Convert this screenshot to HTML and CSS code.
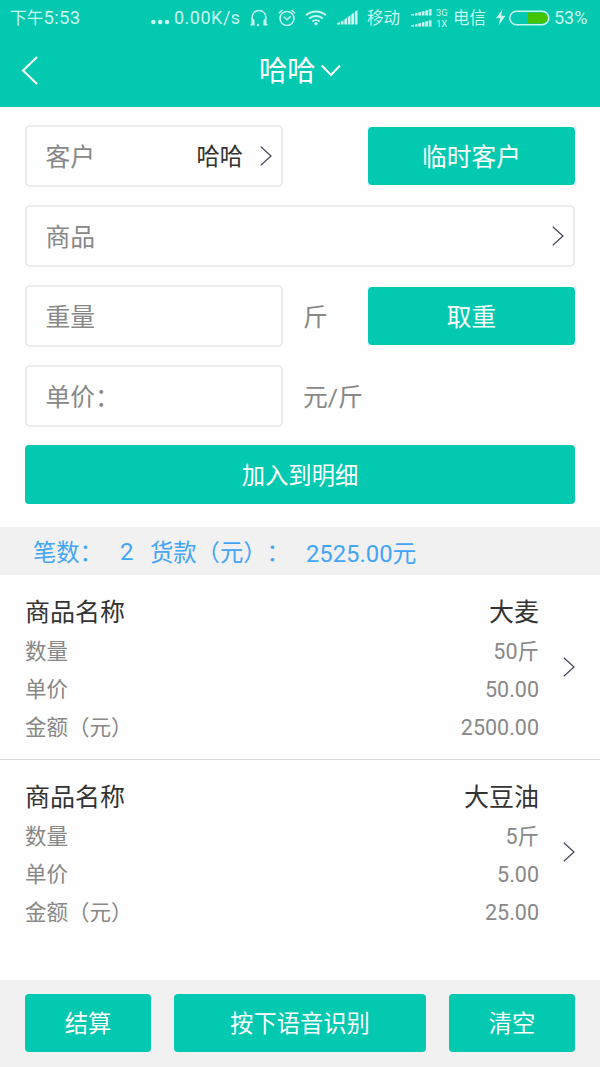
FILE: index.html
```html
<!DOCTYPE html>
<html lang="zh-CN">
<head>
<meta charset="utf-8">
<title>哈哈</title>
<link rel="stylesheet" href="styles.css">
</head>
<body>
<div class="app">
  <header class="header">
    <div class="status">
      <span class="clock">下午<span class="digits">5:53</span></span>
      <svg class="dots" width="19" height="6" viewBox="0 0 19 6"><circle cx="2.400" cy="3" r="2.300"/><circle cx="9.200" cy="3" r="2.300"/><circle cx="16" cy="3" r="2.300"/></svg>
      <span class="speed">0.00K/s</span>
      <svg class="headset" width="18" height="18" viewBox="0 0 18 18"><path class="line" d="M.5 15.800h3.300v-4.300L2.200 9.800C1.700 5 4.500 1.500 9 1.500s7.300 3.500 6.800 8.300l-1.600 1.700v4.300h3.300M2.200 9.800v6M15.800 9.800v6"/><circle cx="8" cy="16" r="1.200"/></svg>
      <svg class="alarm" width="18" height="18" viewBox="0 0 18 18"><circle class="line" cx="9" cy="9.500" r="7"/><path class="line" d="M5.800 7.800 9 10.800l3.800-3.500M.8 4.300 4.500 1M17.200 4.300 13.500 1"/></svg>
      <svg class="wifi" width="22" height="16" viewBox="0 0 22 16"><path class="arc" d="M1 5.200a15 15 0 0 1 20 0M4.200 8.600a10.200 10.200 0 0 1 13.600 0M7.400 11.600a5.500 5.500 0 0 1 7.200 0"/><circle cx="11" cy="13.800" r="1.700"/></svg>
      <svg class="signal" width="21" height="15" viewBox="0 0 21 15"><path d="M0 13.200 3 12v2.500H0zM3.800 11.600l2.700-1.200v4.100H3.800zM7.300 9.500 10 8v6.500H7.300zM10.800 7l2.700-1.700v9.200h-2.700zM14.300 4.500 17 2.600v11.900h-2.700zM17.800 1.800 20.500 0v14.500h-2.700z"/></svg>
      <span class="carrier">移动</span>
      <svg class="dual" width="21" height="18" viewBox="0 0 21 18"><g id="bars"><path d="M0 5.300 3 4.700v1.800H0zM3.800 4.500l2.700-.6v2.600H3.800zM7.300 3.600 10 3v3.500H7.300zM10.800 2.600l2.700-.7v4.600h-2.700zM14.300 1.600 17 .9v5.600h-2.700zM17.800.6l2.700-.6v6.500h-2.700z"/></g><use href="#bars" y="11"/></svg>
      <span class="nets"><span>3G</span><span>1X</span></span>
      <span class="carrier two">电信</span>
      <svg class="bolt" width="10" height="17" viewBox="0 0 10 17"><path d="M6.500 0 0 9.200h4.300L2.700 16.500 9.500 6.800H5.200z"/></svg>
      <svg class="battery" width="41" height="16" viewBox="0 0 41 16"><path fill="#44c400" d="M19 2.500H33a5.500 5.500 0 0 1 0 11H19z"/><rect class="line" x=".8" y="1.300" width="39" height="13.400" rx="6.700"/></svg>
      <span class="percent">53%</span>
    </div>
    <div class="titlebar">
      <svg class="back" width="17" height="29" viewBox="0 0 17 29"><path d="M16 1 2 14.500 16 28"/></svg>
      <h1 class="title">哈哈</h1>
      <svg class="down" width="20" height="13" viewBox="0 0 20 13"><path d="M.8 1.500 10 11l9-9.500"/></svg>
    </div>
  </header>

  <main class="form">
    <div class="row">
      <div class="field"><span>客户</span><span class="value">哈哈</span><svg class="chevron" width="12" height="20" viewBox="0 0 12 20"><path d="M.8.800 11 10 .8 19.200"/></svg></div>
      <button class="btn side">临时客户</button>
    </div>
    <div class="row">
      <div class="field wide"><span>商品</span><svg class="chevron push" width="12" height="20" viewBox="0 0 12 20"><path d="M.8.800 11 10 .8 19.200"/></svg></div>
    </div>
    <div class="row">
      <div class="field"><span>重量</span></div>
      <span class="unit">斤</span>
      <button class="btn side">取重</button>
    </div>
    <div class="row">
      <div class="field"><span>单价：</span></div>
      <span class="unit">元/斤</span>
    </div>
    <button class="btn add">加入到明细</button>
  </main>

  <div class="summary"><span class="count-label">笔数：</span><span class="count">2</span><span class="sum-label">货款（元）：</span><span class="sum">2525.00元</span></div>

  <section class="list">
    <article class="item">
      <dl class="lines">
        <div class="pair name"><dt>商品名称</dt><dd>大麦</dd></div>
        <div class="pair"><dt>数量</dt><dd>50斤</dd></div>
        <div class="pair"><dt>单价</dt><dd>50.00</dd></div>
        <div class="pair"><dt>金额（元）</dt><dd>2500.00</dd></div>
      </dl>
      <svg class="chevron" width="12" height="20" viewBox="0 0 12 20"><path d="M.8.800 11 10 .8 19.200"/></svg>
    </article>
    <article class="item">
      <dl class="lines">
        <div class="pair name"><dt>商品名称</dt><dd>大豆油</dd></div>
        <div class="pair"><dt>数量</dt><dd>5斤</dd></div>
        <div class="pair"><dt>单价</dt><dd>5.00</dd></div>
        <div class="pair"><dt>金额（元）</dt><dd>25.00</dd></div>
      </dl>
      <svg class="chevron" width="12" height="20" viewBox="0 0 12 20"><path d="M.8.800 11 10 .8 19.200"/></svg>
    </article>
  </section>

  <footer class="footer">
    <button class="btn">结算</button>
    <button class="btn">按下语音识别</button>
    <button class="btn">清空</button>
  </footer>
</div>
</body>
</html>
```
FILE: styles.css
```css
* { box-sizing: border-box; }
body {
  margin: 0;
  background: #fefefe;
  font-family: Roboto, "Noto Sans CJK SC", sans-serif;
  font-weight: 400;
  text-spacing-trim: space-all;
}
.app { display: flex; flex-direction: column; width: 600px; height: 1067px; overflow: hidden; }

.header { height: 106.5px; background: #02c9b0; color: #fff; flex: none; }
.status {
  display: flex; align-items: center; height: 35px; padding-left: 10px;
  font-size: 17px; line-height: 35px; color: #c9f6ef; white-space: nowrap;
}
.status svg { flex: none; fill: #c9f6ef; }
.status .line { fill: none; stroke: #c9f6ef; stroke-width: 1.5; }
.status .arc { fill: none; stroke: #c9f6ef; stroke-width: 2; }
.status span { flex: none; }
.clock { width: 141px; padding-top: 1px; font-size: 16.800px; }
.digits { font-size: 18.500px; letter-spacing: .3px; }
.dots { margin-top: 8px; }
.speed { width: 76px; padding-left: 4px; font-size: 18px; letter-spacing: .5px; }
.headset { margin-left: 4px; }
.alarm { margin-left: 10px; }
.wifi { margin-left: 9px; }
.signal { margin-left: 10px; }
.carrier { width: 34px; margin-left: 9px; padding-top: 2px; font-size: 16.500px; }
.dual { margin-left: 10px; }
.nets { display: flex; flex-direction: column; width: 13px; margin-left: 4px; font-size: 9.500px; line-height: 11px; }
.two { margin-left: 4px; }
.bolt { margin-left: 9px; }
.battery { margin-left: 3px; }
.percent { margin-left: 4px; font-size: 18px; }

.titlebar { display: flex; align-items: center; height: 71px; padding-left: 21px; }
.titlebar svg { fill: none; stroke: #fff; stroke-width: 2; }
.title { margin: 3px 0 0 221px; font-size: 28.300px; font-weight: 400; line-height: 40px; }
.down { margin-left: 5px; }

.form { display: flex; flex-direction: column; gap: 18px; height: 420.500px; padding: 18.500px 25px 0; flex: none; }
.row { display: flex; align-items: center; height: 62px; font-size: 24.800px; color: #888; }
.field {
  display: flex; align-items: center; width: 258px; height: 62px; padding: 0 9px 0 18.500px;
  border: 2px solid #ececec; border-radius: 5px;
}
.field span, .unit { padding-bottom: 2px; }
.wide { width: 550px; }
.value { margin-left: auto; margin-right: 17px; font-size: 23.300px; color: #333; }
.chevron { flex: none; fill: none; stroke: #45455a; stroke-width: 1.2; }
.push { margin-left: auto; }
.unit { margin-left: 20px; }
.btn {
  height: 58.500px; padding: 0 0 1px; border: 0; border-radius: 4px;
  background: #02c9b0; color: #fff; font: inherit; font-size: 23.300px;
}
.side { width: 207px; margin-left: auto; padding-bottom: 2px; font-size: 24.700px; }
.add { flex: none; padding: 0; }

.summary {
  display: flex; align-items: center; height: 48px; padding: 0 0 0 33px; flex: none;
  background: #f1f1f1; color: #42a5f5; font-size: 23.300px; white-space: nowrap;
}
.count-label { width: 87px; }
.count { width: 30px; padding-top: 1px; font-size: 24px; }
.sum-label { width: 156px; }
.sum { font-size: 23.800px; }

.list { flex: 1; }
.item { display: flex; align-items: center; justify-content: space-between; height: 184px; padding: 0 25px; }
.item + .item { height: 185px; border-top: 1px solid #d9d9d9; }
.lines { width: 514px; margin: 0; padding-top: 3px; }
.item + .item .lines { padding-top: 4px; }
.pair { display: flex; justify-content: space-between; height: 38px; line-height: 38px; font-size: 21.500px; color: #888; }
.name { height: 42px; line-height: 43px; font-size: 25px; color: #333; }
.pair dd { margin: 0; }

.footer {
  display: grid; grid-template-columns: 126px 252px 126px; justify-content: space-between;
  height: 87px; padding: 13.500px 25px 0; background: #f1f1f1; flex: none;
}
```
